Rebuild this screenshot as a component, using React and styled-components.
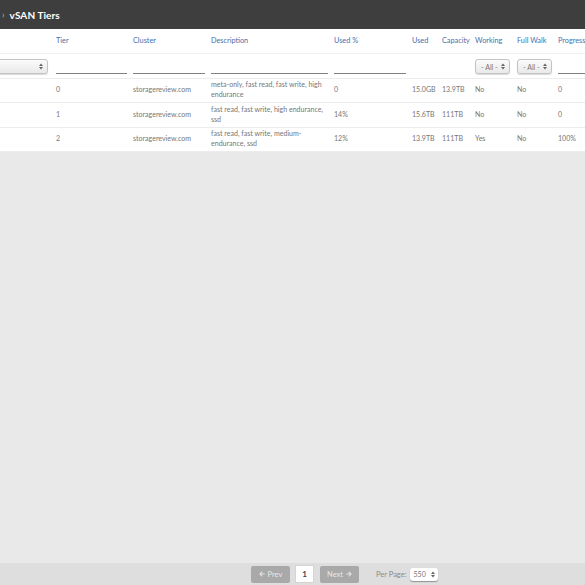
import React from "react";
import styled, { createGlobalStyle } from "styled-components";
import { FaArrowLeft, FaArrowRight } from "react-icons/fa";

const Global = createGlobalStyle`
  html, body { margin: 0; padding: 0; }
  body { font-family: Lato, "Open Sans", sans-serif; background: #e9e9e9; }
  * { box-sizing: border-box; }
`;

const Page = styled.div`
  height: 100vh;
  display: flex;
  flex-direction: column;
  overflow: hidden;
`;

const TitleBar = styled.div`
  height: 29px;
  background: #3e3e3e;
  display: flex;
  align-items: center;
  gap: 5px;
  padding-left: 2px;
  color: #fff;
  flex-shrink: 0;
`;

const Crumb = styled.span`
  color: #bbb;
  font-size: 9px;
`;

const Title = styled.span`
  font-weight: 700;
  font-size: 10px;
  letter-spacing: 0.1px;
`;

const Main = styled.div`
  flex: 1;
  overflow: hidden;
`;

const Scroller = styled.div`
  background: #fff;
  overflow: hidden;
`;

const Table = styled.table`
  border-collapse: collapse;
  table-layout: fixed;
  width: 720px;
  margin-left: -60px;
  font-size: 7.05px;
  color: #767676;
`;

const HeadCell = styled.th`
  text-align: left;
  font-weight: 400;
  font-size: 7.3px;
  color: #4570ad;
  height: 24px;
  padding: 0 6px 0 0;
  vertical-align: middle;
  border-bottom: 1px solid #f0f0f0;
  white-space: nowrap;
`;

const FilterCell = styled.td`
  height: 25px;
  padding: 0 6px 0 0;
  vertical-align: middle;
  border-bottom: 1px solid #ececec;
`;

const Cell = styled.td`
  height: 24.5px;
  padding: 0 6px 0 0;
  vertical-align: middle;
  border-bottom: 1px solid #ececec;
  line-height: 10px;
`;

const LineInput = styled.div`
  height: 12px;
  margin-top: 5px;
  border-bottom: 1.5px solid #808080;
`;

const SelectBox = styled.div`
  width: ${(p) => p.$w}px;
  height: 15px;
  margin-top: 2px;
  border: 1px solid #c4c4c4;
  border-radius: 3px;
  background: linear-gradient(#fbfbfb, #e9e9e9);
  box-shadow: 0 1px 1px rgba(0, 0, 0, 0.15);
  display: flex;
  align-items: center;
  justify-content: space-between;
  padding: 0 4px 0 5px;
  font-size: 7px;
  color: #777;
`;

const Arrows = () => (
  <svg width="4" height="7" viewBox="0 0 4 7">
    <path d="M0 3 L2 0.5 L4 3 Z M0 4 L2 6.5 L4 4 Z" fill="#666" />
  </svg>
);

const BottomBar = styled.div`
  height: 22px;
  background: #dedede;
  display: flex;
  align-items: center;
  padding-left: 251px;
  flex-shrink: 0;
`;

const NavButton = styled.div`
  width: 39px;
  height: 17px;
  border-radius: 2px;
  background: #a9a9a9;
  color: #e8e8e8;
  font-size: 7.5px;
  display: flex;
  align-items: center;
  justify-content: center;
  gap: 3px;
`;

const PageBox = styled.div`
  width: 19px;
  height: 18px;
  margin: 0 6px 0 5px;
  background: #fff;
  border: 1px solid #d4d4d4;
  font-size: 8px;
  font-weight: 700;
  color: #444;
  display: flex;
  align-items: center;
  justify-content: center;
`;

const PerPage = styled.span`
  margin-left: 17px;
  margin-right: 3px;
  font-size: 7.5px;
  color: #8a8a8a;
`;

const SmallSelect = styled.div`
  width: 28px;
  height: 13px;
  background: #fff;
  border-radius: 3px;
  box-shadow: 0 1px 1px rgba(0, 0, 0, 0.35);
  display: flex;
  align-items: center;
  justify-content: space-between;
  padding: 0 3px 0 4px;
  font-size: 7px;
  color: #777;
`;

const cols = [116, 77, 78, 123, 78, 30, 33, 42, 41, 102];

const headers = ["", "Tier", "Cluster", "Description", "Used %", "Used", "Capacity", "Working", "Full Walk", "Progress"];

const rows = [
  ["0", "storagereview.com", "meta-only, fast read, fast write, high endurance", "0", "15.0GB", "13.9TB", "No", "No", "0"],
  ["1", "storagereview.com", "fast read, fast write, high endurance, ssd", "14%", "15.6TB", "111TB", "No", "No", "0"],
  ["2", "storagereview.com", "fast read, fast write, medium-endurance, ssd", "12%", "13.9TB", "111TB", "Yes", "No", "100%"],
];

export default function App() {
  return (
    <Page>
      <Global />
      <TitleBar>
        <Crumb>›</Crumb>
        <Title>vSAN Tiers</Title>
      </TitleBar>
      <Main>
        <Scroller>
          <Table>
            <colgroup>
              {cols.map((w, i) => (
                <col key={i} style={{ width: w }} />
              ))}
            </colgroup>
            <thead>
              <tr>
                {headers.map((h, i) => (
                  <HeadCell key={i}>{h}</HeadCell>
                ))}
              </tr>
              <tr>
                <FilterCell>
                  <SelectBox $w={108}>
                    <span />
                    <Arrows />
                  </SelectBox>
                </FilterCell>
                <FilterCell><LineInput /></FilterCell>
                <FilterCell><LineInput /></FilterCell>
                <FilterCell><LineInput /></FilterCell>
                <FilterCell><LineInput /></FilterCell>
                <FilterCell />
                <FilterCell />
                <FilterCell>
                  <SelectBox $w={35}>
                    <span>- All -</span>
                    <Arrows />
                  </SelectBox>
                </FilterCell>
                <FilterCell>
                  <SelectBox $w={35}>
                    <span>- All -</span>
                    <Arrows />
                  </SelectBox>
                </FilterCell>
                <FilterCell><LineInput /></FilterCell>
              </tr>
            </thead>
            <tbody>
              {rows.map((r, i) => (
                <tr key={i}>
                  <Cell />
                  {r.map((c, j) => (
                    <Cell key={j}>{c}</Cell>
                  ))}
                </tr>
              ))}
            </tbody>
          </Table>
        </Scroller>
      </Main>
      <BottomBar>
        <NavButton>
          <FaArrowLeft size={6} />
          Prev
        </NavButton>
        <PageBox>1</PageBox>
        <NavButton>
          Next
          <FaArrowRight size={6} />
        </NavButton>
        <PerPage>Per Page:</PerPage>
        <SmallSelect>
          <span>550</span>
          <Arrows />
        </SmallSelect>
      </BottomBar>
    </Page>
  );
}
